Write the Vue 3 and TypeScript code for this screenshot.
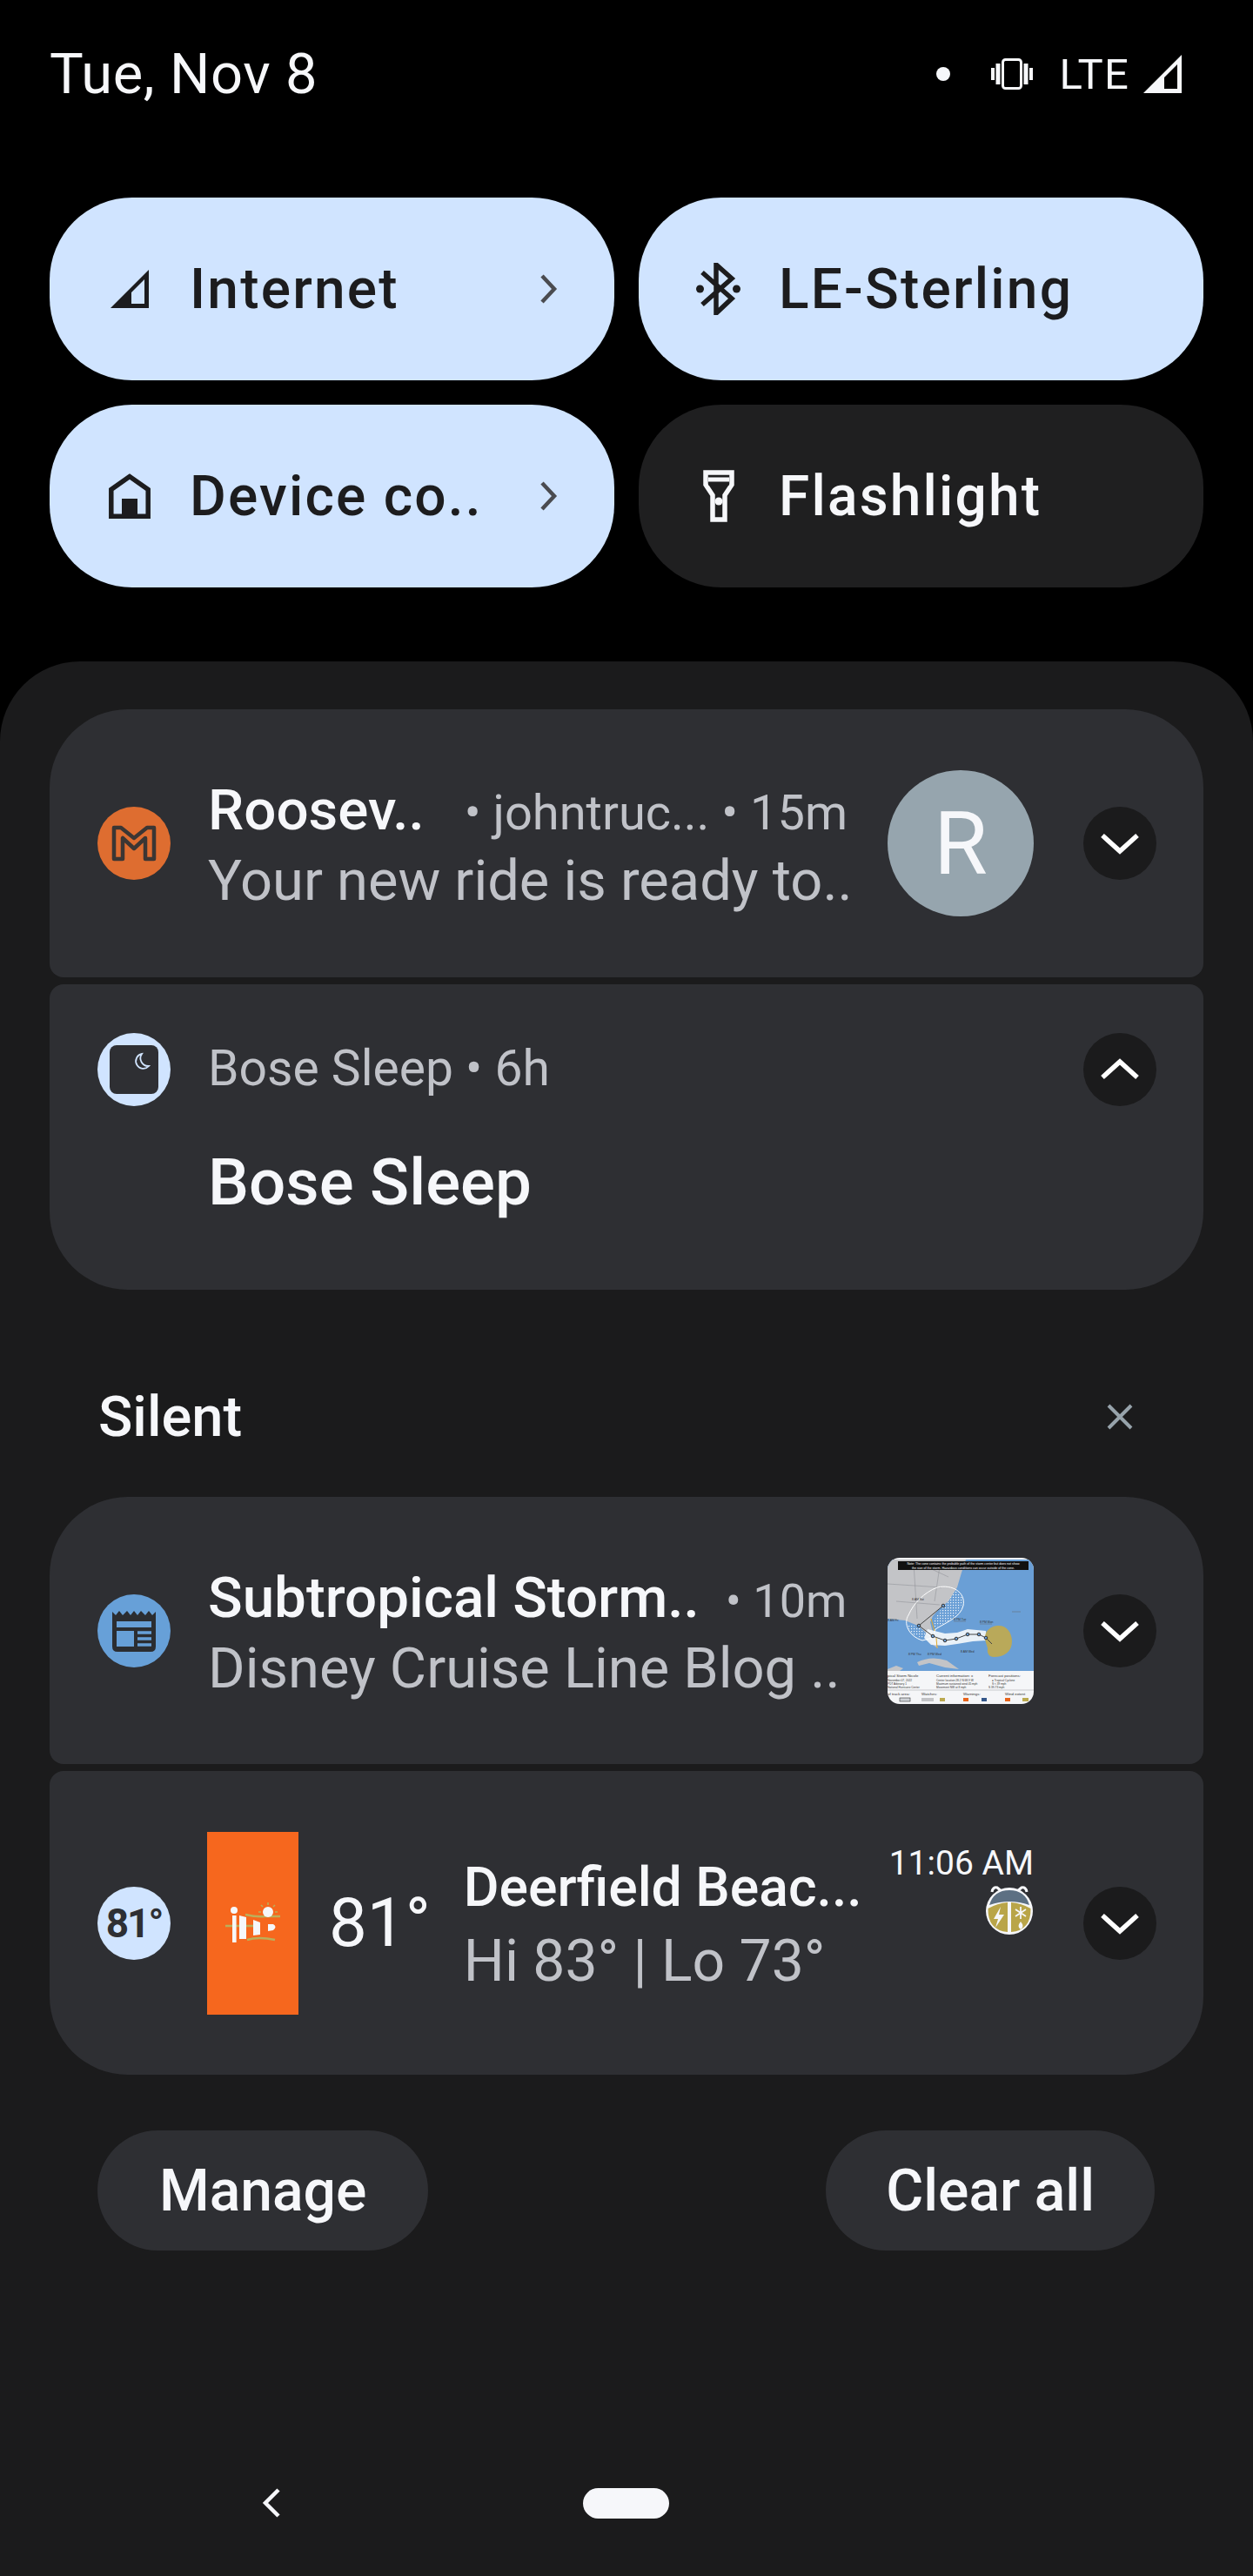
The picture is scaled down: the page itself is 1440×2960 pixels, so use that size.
<script setup lang="ts">
interface Tile {
  label: string;
  icon: "signal" | "bluetooth" | "home" | "flashlight";
  active: boolean;
  chevron: boolean;
}

const tiles: Tile[] = [
  { label: "Internet", icon: "signal", active: true, chevron: true },
  { label: "LE-Sterling", icon: "bluetooth", active: true, chevron: false },
  { label: "Device co..", icon: "home", active: true, chevron: true },
  { label: "Flashlight", icon: "flashlight", active: false, chevron: false },
];
</script>

<template>
  <div class="screen">
    <header class="status">
      <span class="date">Tue, Nov 8</span>
      <div class="status-icons">
        <span class="dot"></span>
        <svg class="vibrate" width="48" height="36" viewBox="0 0 48 36" fill="none" stroke="#f6f7fa">
          <rect x="13.5" y="1.5" width="21" height="33" rx="3" stroke-width="3" />
          <path d="M8 6v24M40 6v24" stroke-width="5" />
          <path d="M2 11v14M46 11v14" stroke-width="4" />
        </svg>
        <span class="lte">LTE</span>
        <svg width="44" height="44" viewBox="0 0 44 44">
          <path fill="#f6f7fa" fill-rule="evenodd" d="M0 44 44 0V44ZM24 39H39V11L24 26Z" />
        </svg>
      </div>
    </header>

    <section class="tiles">
      <div v-for="tile in tiles" :key="tile.label" class="tile" :class="{ active: tile.active }">
        <span class="tile-icon">
          <svg v-if="tile.icon === 'signal'" width="44" height="44" viewBox="0 0 44 44">
            <path fill="#1c1c1e" fill-rule="evenodd" d="M0 44 44 0V44ZM24 39H39V11L24 26Z" />
          </svg>
          <svg v-else-if="tile.icon === 'bluetooth'" width="52" height="60" viewBox="0 0 52 60">
            <path fill="none" stroke="#1c1c1e" stroke-width="5.5" d="M7 11 41 41 23 58V2L41 18 7 48" />
            <circle cx="4.5" cy="30" r="4.5" fill="#1c1c1e" />
            <circle cx="46.5" cy="30" r="4.5" fill="#1c1c1e" />
          </svg>
          <svg v-else-if="tile.icon === 'home'" width="48" height="52" viewBox="0 0 48 52">
            <path fill="none" stroke="#1c1c1e" stroke-width="5.5" d="M24 3.5 2.8 18.5V49.2H45.2V18.5Z" />
            <rect x="15" y="29" width="18" height="22" fill="#1c1c1e" />
          </svg>
          <svg v-else width="36" height="60" viewBox="0 0 36 60">
            <path fill="none" stroke="#f6f7fa" stroke-width="5.5" d="M3 3H33V17L25 29V57H11V29L3 17Z" />
            <path d="M6 8.5H30V13.5H6Z" fill="#f6f7fa" />
            <path d="M6 15H30V17.5H6Z" fill="#1f1f20" />
            <circle cx="18" cy="36" r="4.5" fill="#f6f7fa" />
          </svg>
        </span>
        <span class="tile-label">{{ tile.label }}</span>
        <svg v-if="tile.chevron" class="tile-chevron" width="22" height="34" viewBox="0 0 22 34">
          <path fill="none" stroke="#4a4b50" stroke-width="4.5" d="M4 2 18 17 4 32" />
        </svg>
      </div>
    </section>

    <main class="panel">
      <div class="card top-round">
        <span class="app-icon orange">
          <svg width="52" height="42" viewBox="0 0 52 42">
            <path fill="none" stroke="#3b3634" stroke-width="4.5" stroke-linejoin="round" d="M3 39V3H11L26 15 41 3H49V39H39V15L26 27 13 15V39Z" />
          </svg>
        </span>
        <div class="body">
          <div class="line-top">
            <span class="title">Roosev..</span>
            <span class="meta meta-gap">• johntruc... • 15m</span>
          </div>
          <div class="subtitle">Your new ride is ready to..</div>
        </div>
        <span class="avatar">R</span>
        <span class="expand">
          <svg width="46" height="26" viewBox="0 0 46 26"><path fill="none" stroke="#fff" stroke-width="5.5" d="M3 4 23 22 43 4" /></svg>
        </span>
      </div>

      <div class="card bottom-round bose">
        <div class="bose-head">
          <span class="app-icon pale">
            <svg width="56" height="56" viewBox="0 0 56 56">
              <rect width="56" height="56" rx="8" fill="#2e2f33" />
              <path fill="none" stroke="#d0e4ff" stroke-width="1.8" d="M37 10A8.5 8.5 0 1 0 45 24 9 9 0 0 1 37 10Z" />
            </svg>
          </span>
          <span class="meta bose-meta">Bose Sleep • 6h</span>
          <span class="expand">
            <svg width="46" height="26" viewBox="0 0 46 26"><path fill="none" stroke="#fff" stroke-width="5.5" d="M3 22 23 4 43 22" /></svg>
          </span>
        </div>
        <div class="bose-title">Bose Sleep</div>
      </div>

      <div class="silent">
        <span>Silent</span>
        <svg width="32" height="32" viewBox="0 0 32 32">
          <path fill="none" stroke="#97a3ab" stroke-width="4" d="M3 3 29 29M29 3 3 29" />
        </svg>
      </div>

      <div class="card top-round storm">
        <span class="app-icon blue">
          <svg width="50" height="48" viewBox="0 0 50 48">
            <path fill="#2b2d31" d="M0 2 4 6 8 1 12 6 17 1 21 6 25 1 29 6 33 1 38 6 42 1 46 6 50 2V42Q50 48 44 48H6Q0 48 0 42Z" />
            <rect x="5" y="13" width="40" height="7" fill="#67a0d8" />
            <rect x="5" y="24" width="20" height="18" fill="#67a0d8" />
            <path stroke="#67a0d8" stroke-width="3.5" d="M29 26H45M29 33H45M29 40H45" />
          </svg>
        </span>
        <div class="body">
          <div class="line-top">
            <span class="title">Subtropical Storm..</span>
            <span class="meta meta-tight">• 10m</span>
          </div>
          <div class="subtitle">Disney Cruise Line Blog ..</div>
        </div>
        <svg class="map" width="168" height="168" viewBox="0 0 168 168">
          <defs>
            <pattern id="stipple" width="3" height="3" patternUnits="userSpaceOnUse">
              <rect width="1.2" height="1.2" fill="#f4f7fb" />
            </pattern>
          </defs>
          <rect width="168" height="168" fill="#f5f6f8" />
          <rect y="2" width="168" height="128" fill="#6a9fd6" />
          <path fill="#c3c4c7" d="M0 2H90L85 17 80 34 70 50 60 58 52 67 49 74 53 90 58 104 52 100 46 88 35 78 20 72 0 70Z" />
          <path fill="#c3c4c7" d="M34 120Q50 112 68 118L82 128 66 126 48 121 36 124Z" />
          <path fill="#c3c4c7" d="M0 128 10 124 18 127 14 130H0Z" />
          <path fill="none" stroke="#8b8d92" stroke-width=".5" d="M0 30 62 34M30 6 34 70M60 10 54 50M10 50 60 54M40 8 70 22" />
          <path fill="url(#stipple)" d="M52 74 62 58 72 46 78 36 86 46 84 58 72 72 54 80ZM22 76 36 80 46 88 40 92 28 88Z" />
          <path fill="#f4f7fb" fill-opacity=".92" d="M46 82 66 87 80 86 92 82 113 84 114 95 98 96 80 99 66 101 50 100 42 92Z" />
          <path fill="none" stroke="#fff" stroke-width="1" d="M57 34C75 30 90 40 87 55 84 68 68 74 55 82L52 92 40 95C24 90 18 75 24 66 30 52 42 40 57 34Z" />
          <path fill="#b9a95a" d="M112 92C112 84 118 79 126 78 136 77 143 85 143 96 143 108 134 114 122 114 117 114 114 110 115 104 114 100 112 96 112 92Z" />
          <path fill="none" stroke="#e2a92d" stroke-width="1" d="M50 70 54 84M56 92 57 104" />
          <path fill="none" stroke="#444" stroke-width="1" d="M64 55 36 78 52 90 66 95 79 93 92 88 105 88 113 92 120 99" />
          <g fill="#6a9fd6" stroke="#333" stroke-width="1">
            <circle cx="64" cy="55" r="1.8" /><circle cx="36" cy="78" r="1.8" /><circle cx="52" cy="90" r="1.8" />
            <circle cx="66" cy="95" r="1.8" /><circle cx="79" cy="93" r="1.8" /><circle cx="92" cy="88" r="1.8" />
            <circle cx="105" cy="88" r="1.8" /><circle cx="113" cy="92" r="1.8" />
          </g>
          <path stroke="#666" stroke-width=".5" d="M76 73H90M106 76H120M143 62H153" />
          <rect x="12" y="4" width="150" height="10" fill="#111" />
          <g class="map-text" fill="#fff" font-size="3.6" text-anchor="middle">
            <text x="87" y="8">Note: The cone contains the probable path of the storm center but does not show</text>
            <text x="87" y="12.6">the size of the storm. Hazardous conditions can occur outside of the cone.</text>
          </g>
          <g class="map-text" fill="#333" font-size="3.4">
            <text x="28" y="49">8 AM Sat</text>
            <text x="0" y="73">8 AM Fri</text>
            <text x="76" y="72">8 PM Tue</text>
            <text x="106" y="75">8 PM Mon</text>
            <text x="24" y="112">8 PM Thu</text>
            <text x="46" y="112">8 PM Wed</text>
            <text x="84" y="109">8 AM Wed</text>
          </g>
          <g class="map-text" fill="#333" font-size="4.4">
            <text x="0" y="137">pical Storm Nicole</text>
            <text x="56" y="137">Current information: x</text>
            <text x="116" y="137">Forecast positions:</text>
            <text x="0" y="142" font-size="3.2">November 07, 2022</text>
            <text x="56" y="142" font-size="3.2">Center location 28.2 N 68.9 W</text>
            <text x="120" y="142" font-size="3.2">● Tropical Cyclone</text>
            <text x="0" y="146" font-size="3.2">PDT Advisory 1</text>
            <text x="56" y="146" font-size="3.2">Maximum sustained wind 45 mph</text>
            <text x="120" y="146" font-size="3.2">S &lt; 39 mph</text>
            <text x="0" y="150" font-size="3.2">National Hurricane Center</text>
            <text x="56" y="150" font-size="3.2">Movement NW at 8 mph</text>
            <text x="116" y="150" font-size="3.2">S 39-73 mph</text>
            <text x="0" y="158">of track area:</text>
            <text x="39" y="158">Watches:</text>
            <text x="87" y="158">Warnings:</text>
            <text x="135" y="158">Wind extent</text>
          </g>
          <path stroke="#c8c9cc" stroke-width="1" d="M0 152H168" />
          <g>
            <rect x="14" y="161" width="12" height="4" fill="#cfd3d8" stroke="#333" stroke-width=".6" />
            <rect x="39" y="161" width="14" height="4" fill="#c3c4c7" />
            <rect x="60" y="161" width="6" height="4" fill="#bba94f" />
            <rect x="87" y="161" width="6" height="4" fill="#e8641b" />
            <rect x="108" y="161" width="6" height="4" fill="#34578a" />
            <rect x="135" y="161" width="6" height="4" fill="#e8641b" />
            <rect x="155" y="161" width="7" height="4" fill="#bba94f" />
          </g>
        </svg>
        <span class="expand">
          <svg width="46" height="26" viewBox="0 0 46 26"><path fill="none" stroke="#fff" stroke-width="5.5" d="M3 4 23 22 43 4" /></svg>
        </span>
      </div>

      <div class="card bottom-round weather">
        <span class="app-icon pale temp-icon">81°</span>
        <div class="orange-block">
          <svg width="64" height="48" viewBox="0 0 64 48">
            <path fill="none" stroke="#bcae5a" stroke-width="2.4" d="M0 27H32M23 14Q36 17 46 16H63M25 43Q38 39 57 43" />
            <circle cx="10" cy="9" r="4" fill="#f6f7fa" />
            <rect x="8" y="15" width="4.6" height="31" fill="#f6f7fa" />
            <path fill="#f6f7fa" d="M16 15 24 17V42H16ZM32 20 40 23V37L32 38ZM49 25H55Q60 28 55 32L49 33Z" />
            <circle cx="49" cy="11" r="6" fill="#f6f7fa" />
            <path stroke="#bcae5a" stroke-width="1.6" d="M49 0V3M41 3 43 5M57 3 55 5M38 11H41M57 11H60" />
          </svg>
        </div>
        <span class="big-temp">81°</span>
        <div class="weather-body">
          <div class="weather-title">Deerfield Beac...</div>
          <div class="weather-sub">Hi 83° | Lo 73°</div>
        </div>
        <div class="weather-side">
          <span class="time">11:06 AM</span>
          <svg class="wx-logo" width="56" height="58" viewBox="0 0 56 58">
            <path fill="none" stroke="#f6f7fa" stroke-width="3" d="M8 9Q9 3 14 4L20 9M48 9Q47 3 42 4L36 9" />
            <circle cx="28" cy="31" r="27" fill="#f6f7fa" />
            <path fill="#5d7083" d="M5 24Q10 7 28 7 46 7 51 24 28 16 5 24Z" />
            <path fill="#b9a548" d="M3.500 28Q14 22 26 21V55Q3 53 3.500 28ZM30 21Q42 22 52.500 28 53 53 30 55Z" />
            <path fill="#f6f7fa" d="M18 26 10 40H15L12 50 22 35H16ZM41 43Q46 49 41 52 36 49 41 43Z" />
            <path stroke="#f6f7fa" stroke-width="1.8" d="M41 26V40M35 29 47 37M47 29 35 37" />
          </svg>
        </div>
        <span class="expand">
          <svg width="46" height="26" viewBox="0 0 46 26"><path fill="none" stroke="#fff" stroke-width="5.5" d="M3 4 23 22 43 4" /></svg>
        </span>
      </div>

      <div class="actions">
        <span class="pill">Manage</span>
        <span class="pill clear">Clear all</span>
      </div>

      <nav class="nav">
        <svg width="26" height="36" viewBox="0 0 26 36">
          <path fill="none" stroke="#f6f7fa" stroke-width="4.5" d="M21 3 6 18 21 33" />
        </svg>
        <span class="home-pill"></span>
      </nav>
    </main>
  </div>
</template>

<style scoped>
.screen {
  width: 1440px;
  height: 2960px;
  display: flex;
  flex-direction: column;
  background: #000;
  font-family: Roboto, "Noto Sans", sans-serif;
  color: #f6f7fa;
  overflow: hidden;
}

.status {
  height: 227px;
  padding: 47px 57px 0;
  box-sizing: border-box;
  display: flex;
  justify-content: space-between;
  align-items: flex-start;
}

.date {
  font-size: 65px;
  line-height: 76px;
  letter-spacing: 0.6px;
}

.status-icons {
  display: flex;
  align-items: center;
  height: 76px;
  margin-right: 25px;
}

.dot {
  width: 16px;
  height: 16px;
  border-radius: 50%;
  background: #f6f7fa;
  margin-right: 47px;
}

.lte {
  font-size: 49px;
  margin: 0 16px 0 31px;
  letter-spacing: 1.2px;
}

.tiles {
  display: grid;
  grid-template-columns: 649px 649px;
  grid-auto-rows: 210px;
  gap: 28px;
  padding: 0 57px;
  height: 533px;
  box-sizing: border-box;
}

.tile {
  display: flex;
  align-items: center;
  padding: 0 62px 0 66px;
  border-radius: 95px;
  background: #1f1f20;
  color: #f6f7fa;
}

.tile.active {
  background: #d0e4ff;
  color: #1c1c1e;
}

.tile-icon {
  width: 52px;
  display: flex;
  justify-content: center;
  flex-shrink: 0;
  margin-right: 43px;
}

.tile-label {
  flex: 1;
  font-size: 64px;
  font-weight: 500;
  letter-spacing: 2.2px;
}

.tile-chevron {
  margin-right: 3px;
}

.panel {
  flex: 1;
  display: flex;
  flex-direction: column;
  padding: 55px 57px 0;
  background: #1b1b1c;
  border-radius: 92px 92px 0 0;
}

.card {
  display: flex;
  align-items: center;
  padding: 0 54px 0 55px;
  box-sizing: border-box;
  background: #2e2f33;
  border-radius: 16px;
}

.top-round {
  height: 308px;
  border-radius: 90px 90px 16px 16px;
}

.bottom-round {
  margin-top: 8px;
  height: 351px;
  border-radius: 16px 16px 90px 90px;
}

.app-icon {
  width: 84px;
  height: 84px;
  border-radius: 50%;
  flex-shrink: 0;
  display: flex;
  align-items: center;
  justify-content: center;
}

.orange {
  background: #de6d30;
}

.pale {
  background: #d0e4ff;
}

.blue {
  background: #67a0d8;
}

.body {
  flex: 1;
  min-width: 0;
  margin: 0 32px 0 43px;
  padding-top: 6px;
}

.line-top {
  display: flex;
  align-items: baseline;
  white-space: nowrap;
}

.title {
  font-size: 65.5px;
  line-height: 80px;
  font-weight: 500;
  color: #f6f7fa;
}

.meta {
  font-size: 56px;
  color: #c0c2c8;
  white-space: nowrap;
}

.meta-gap {
  margin-left: 46px;
}

.meta-tight {
  margin-left: 30px;
  font-size: 54px;
}

.subtitle {
  font-size: 65px;
  line-height: 82px;
  color: #c0c2c8;
  white-space: nowrap;
}

.avatar {
  width: 168px;
  height: 168px;
  flex-shrink: 0;
  border-radius: 50%;
  background: #96a5ae;
  color: #f6f7fa;
  font-size: 100px;
  display: flex;
  align-items: center;
  justify-content: center;
}

.expand {
  width: 84px;
  height: 84px;
  flex-shrink: 0;
  margin-left: 57px;
  border-radius: 50%;
  background: #1b1b1c;
  display: flex;
  align-items: center;
  justify-content: center;
}

.bose {
  display: block;
  padding-top: 56px;
}

.bose-head {
  display: flex;
  align-items: center;
}

.bose-meta {
  flex: 1;
  margin-left: 43px;
  padding-bottom: 4px;
  font-size: 57px;
}

.bose-title {
  margin: 43px 0 0 127px;
  font-size: 74.5px;
  line-height: 90px;
  font-weight: 500;
}

.silent {
  height: 238px;
  padding: 54px 80px 0 56px;
  box-sizing: border-box;
  display: flex;
  justify-content: space-between;
  align-items: center;
  font-size: 65px;
  font-weight: 500;
}

.storm {
  height: 307px;
}

.map {
  flex-shrink: 0;
  border-radius: 14px;
}

.map-text {
  font-family: "Liberation Sans", sans-serif;
}

.weather {
  height: 349px;
}

.temp-icon {
  color: #2e2f33;
  font-size: 46px;
  font-weight: 700;
  letter-spacing: -2px;
}

.orange-block {
  width: 105px;
  height: 210px;
  flex-shrink: 0;
  margin-left: 42px;
  background: #f6671e;
  display: flex;
  align-items: center;
  justify-content: center;
}

.big-temp {
  margin-left: 35px;
  font-size: 78px;
  flex-shrink: 0;
}

.weather-body {
  flex: 1;
  margin-left: 38px;
  padding-top: 4px;
  white-space: nowrap;
}

.weather-title {
  font-size: 62.5px;
  line-height: 84px;
  font-weight: 500;
}

.weather-sub {
  font-size: 66px;
  line-height: 86px;
  color: #c0c2c8;
}

.weather-side {
  width: 168px;
  flex-shrink: 0;
  display: flex;
  flex-direction: column;
  align-items: flex-end;
  margin-top: -81px;
}

.wx-logo {
  margin-top: -1px;
}

.time {
  font-size: 39px;
  line-height: 50px;
  white-space: nowrap;
}

.actions {
  display: flex;
  justify-content: space-between;
  margin-top: 64px;
  padding: 0 56px 0 55px;
}

.pill {
  height: 138px;
  padding: 0 71px;
  border-radius: 69px;
  background: #2e2f33;
  font-size: 66px;
  font-weight: 500;
  display: flex;
  align-items: center;
}

.pill.clear {
  padding: 0 69px;
}

.nav {
  display: flex;
  align-items: center;
  margin-top: 272px;
  padding-left: 242px;
}

.home-pill {
  width: 99px;
  height: 35px;
  margin-left: 345px;
  border-radius: 18px;
  background: #f6f7fa;
}
</style>
